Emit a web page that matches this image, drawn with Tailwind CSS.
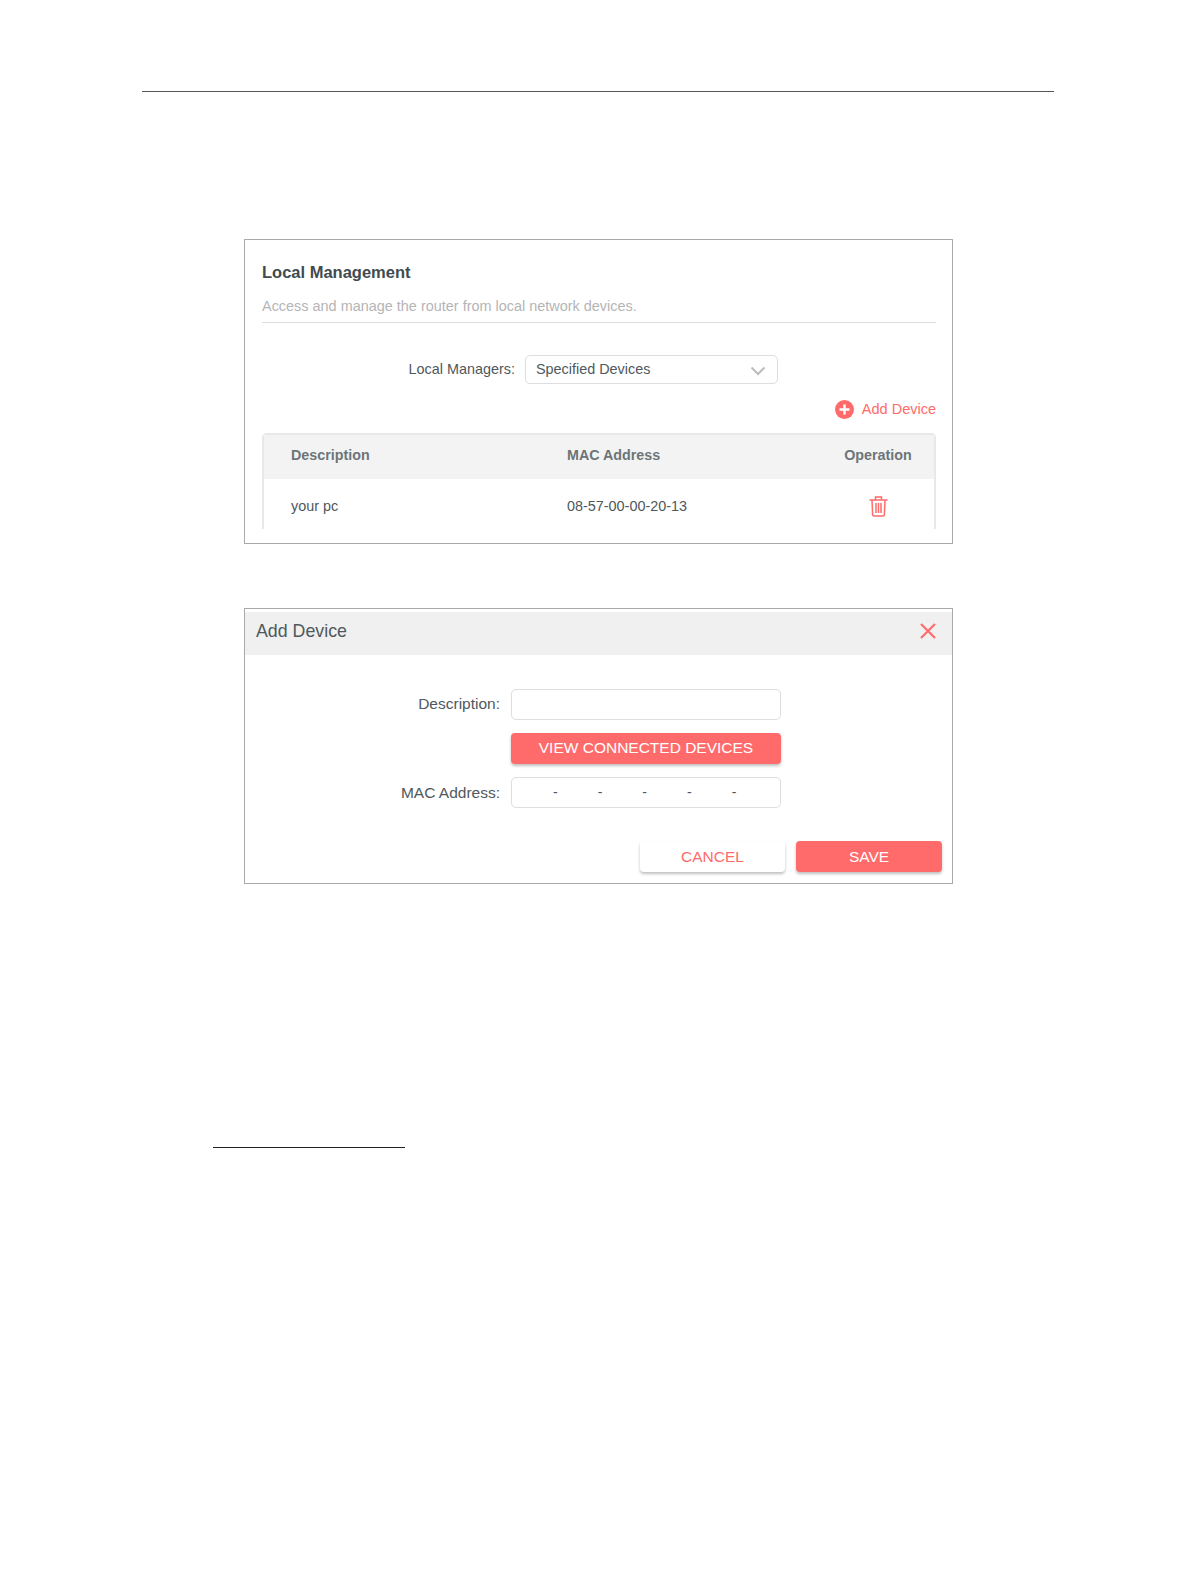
<!DOCTYPE html>
<html lang="en">
<head>
    <meta charset="UTF-8">
    <title>Local Management</title>
    <script src="https://cdn.jsdelivr.net/npm/@tailwindcss/browser@4"></script>
</head>
<body class="bg-white font-['Liberation_Sans',Arial,sans-serif] text-[#4f585c]">
    <div class="w-[1196px] h-[1582px] overflow-hidden pt-[91px]">
        <!-- page header rule -->
        <div class="ml-[142px] w-[912px] h-px bg-[#555]"></div>

        <!-- Local Management panel -->
        <div class="ml-[244px] mt-[147px] w-[709px] h-[305px] border border-[#aaa] pl-[17px] pr-[16px]">
            <h2 class="mt-[22px] text-[16.500px] leading-5 font-bold text-[#414b4f]">Local Management</h2>
            <p class="mt-[14px] text-[14.450px] leading-5 text-[#b5b5b5]">Access and manage the router from local network devices.</p>
            <div class="mt-[6px] h-px bg-[#dcdcdc]"></div>

            <div class="mt-[32px] flex items-center">
                <span class="w-[253px] text-right text-[14.400px]">Local Managers:</span>
                <div class="ml-[10px] w-[253px] h-[29px] border border-[#dedede] rounded-[5px] px-[10px] flex items-center justify-between text-[14.400px]">
                    <span>Specified Devices</span>
                    <svg width="16" height="10" viewBox="0 0 16 10" fill="none" stroke="#bdbdbd" stroke-width="2" class="mr-[1px] mt-[2px]"><path d="M1.500 1.500 8 8l6.500-6.500"/></svg>
                </div>
            </div>

            <div class="mt-[15px] h-5 flex items-center justify-end gap-[8px] text-[14.500px] text-[#ff6b6b]">
                <svg width="19" height="19" viewBox="0 0 19 19"><circle cx="9.500" cy="9.500" r="9.500" fill="#ff6b6b"/><path d="M9.500 4.500v10M4.500 9.500h10" stroke="#fff" stroke-width="2.400"/></svg>
                <span class="mt-[1px]">Add Device</span>
            </div>

            <!-- devices table -->
            <div class="mt-[14px] h-[96px] border-x-2 border-t-2 border-[#e8e8e8] rounded-t-[5px]">
                <div class="h-[44px] pb-[2px] bg-[#f3f3f3] flex items-center text-[14.300px] font-bold text-[#6c7578]">
                    <span class="ml-[27px] w-[276px]">Description</span>
                    <span class="w-[277px]">MAC Address</span>
                    <span class="w-[68px] text-center">Operation</span>
                </div>
                <div class="h-[50px] pt-[5px] flex items-center text-[14.400px]">
                    <span class="ml-[27px] w-[276px]">your pc</span>
                    <span class="w-[277px]">08-57-00-00-20-13</span>
                    <span class="w-[68px] flex justify-center">
                        <svg width="19" height="21" viewBox="0 0 19 21" fill="none" stroke="#ff6b6b" stroke-width="1.500"><path d="M0.500 4h18M6.500 4V1h6v3M3 4l.6 14.500a1.500 1.500 0 0 0 1.500 1.500h8.800a1.500 1.500 0 0 0 1.500-1.500L16 4M7 7v10M9.500 7v10M12 7v10"/></svg>
                    </span>
                </div>
            </div>
        </div>

        <!-- Add Device dialog -->
        <div class="ml-[244px] mt-[64px] w-[709px] h-[276px] border border-[#aaa] pt-[3px]">
            <div class="h-[43px] bg-[#f0f0f0] pl-[11px] pr-[16px] flex items-center justify-between">
                <span class="mb-[4px] text-[17.800px]">Add Device</span>
                <svg width="16" height="16" viewBox="0 0 16 16" fill="none" stroke="#ff6b6b" stroke-width="2.200" class="mb-[6px]"><path d="M1 1l14 14M15 1 1 15"/></svg>
            </div>

            <div class="mt-[34px] flex items-center">
                <span class="mb-[1px] w-[255px] text-right text-[15.500px]">Description:</span>
                <div class="ml-[11px] w-[270px] h-[31px] border border-[#dedede] rounded-[5px]"></div>
            </div>
            <div class="mt-[13px] ml-[266px] w-[270px] h-[31px] pb-[1px] bg-[#ff6b6b] rounded-[4px] shadow-[0_2px_3px_rgba(0,0,0,0.25)] flex items-center justify-center text-[15.500px] text-white">VIEW CONNECTED DEVICES</div>
            <div class="mt-[13px] flex items-center">
                <span class="w-[255px] text-right text-[15.500px]">MAC Address:</span>
                <div class="ml-[11px] w-[270px] h-[31px] border border-[#dedede] rounded-[5px] pl-[41px] flex items-center gap-[40px] text-[14px]">
                    <span>-</span><span>-</span><span>-</span><span>-</span><span>-</span>
                </div>
            </div>

            <div class="mt-[33px] pr-[10px] flex justify-end gap-[11px] text-[15.500px]">
                <div class="w-[145px] h-[31px] bg-white rounded-[4px] shadow-[0_2px_3px_rgba(0,0,0,0.25)] flex items-center justify-center text-[#ff6b6b]">CANCEL</div>
                <div class="w-[146px] h-[31px] bg-[#ff6b6b] rounded-[4px] shadow-[0_2px_3px_rgba(0,0,0,0.25)] flex items-center justify-center text-white">SAVE</div>
            </div>
        </div>

        <!-- footnote rule -->
        <div class="ml-[213px] mt-[263px] w-[192px] h-px bg-[#222]"></div>
    </div>
</body>
</html>
